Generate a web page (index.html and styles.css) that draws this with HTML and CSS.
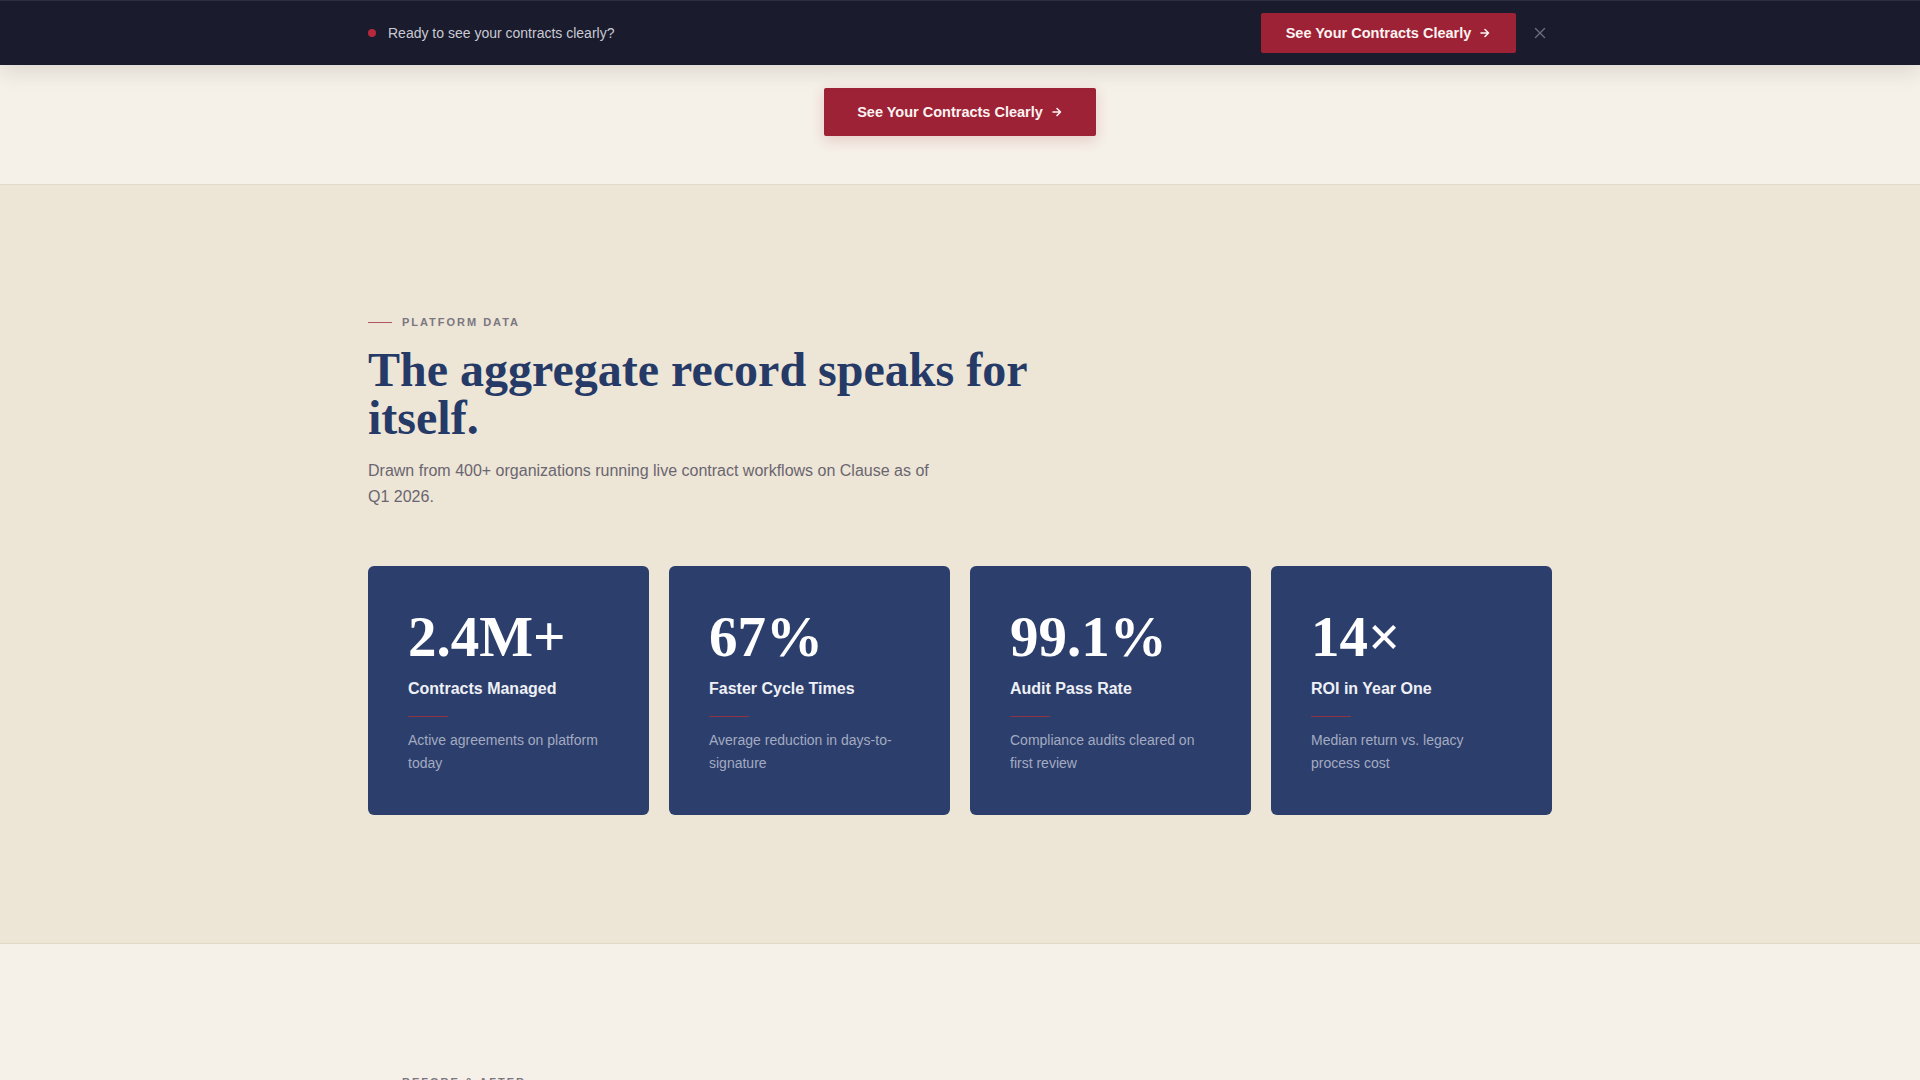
FILE: index.html
```html
<!DOCTYPE html>
<html lang="en">
<head>
<meta charset="utf-8">
<title>Clause — Platform Data</title>
<link rel="stylesheet" href="styles.css">
</head>
<body>
  <div class="topbar">
    <div class="container topbar-inner">
      <div class="topbar-msg">
        <span class="dot"></span>
        <span>Ready to see your contracts clearly?</span>
      </div>
      <div class="topbar-actions">
        <a class="btn btn-sm" href="#">See Your Contracts Clearly <span class="arrow">
          <svg width="12" height="12" viewBox="0 0 12 12"><path d="M2 6h7.5M6 2.5L9.5 6 6 9.5" fill="none" stroke="currentColor" stroke-width="1.6" stroke-linecap="round" stroke-linejoin="round"/></svg>
        </span></a>
        <button class="close" aria-label="Close">
          <svg width="12" height="12" viewBox="0 0 12 12"><path d="M1.5 1.5l9 9M10.5 1.5l-9 9" stroke="currentColor" stroke-width="1.4" stroke-linecap="round"/></svg>
        </button>
      </div>
    </div>
  </div>

  <section class="hero">
    <div class="container hero-inner">
      <a class="btn btn-lg" href="#">See Your Contracts Clearly <span class="arrow">
        <svg width="12" height="12" viewBox="0 0 12 12"><path d="M2 6h7.5M6 2.5L9.5 6 6 9.5" fill="none" stroke="currentColor" stroke-width="1.6" stroke-linecap="round" stroke-linejoin="round"/></svg>
      </span></a>
    </div>
  </section>

  <section class="stats">
    <div class="container">
      <div class="eyebrow"><span class="eyebrow-line"></span>PLATFORM DATA</div>
      <h2 class="title">The aggregate record speaks for itself.</h2>
      <p class="lead">Drawn from 400+ organizations running live contract workflows on Clause as of Q1 2026.</p>

      <div class="cards">
        <div class="card">
          <div class="num">2.4M+</div>
          <div class="label">Contracts Managed</div>
          <div class="rule"></div>
          <p class="desc">Active agreements on platform today</p>
        </div>
        <div class="card">
          <div class="num">67%</div>
          <div class="label">Faster Cycle Times</div>
          <div class="rule"></div>
          <p class="desc">Average reduction in days-to-signature</p>
        </div>
        <div class="card">
          <div class="num">99.1%</div>
          <div class="label">Audit Pass Rate</div>
          <div class="rule"></div>
          <p class="desc">Compliance audits cleared on first review</p>
        </div>
        <div class="card">
          <div class="num">14×</div>
          <div class="label">ROI in Year One</div>
          <div class="rule"></div>
          <p class="desc">Median return vs. legacy process cost</p>
        </div>
      </div>
    </div>
  </section>

  <section class="compare">
    <div class="container">
      <div class="eyebrow"><span class="eyebrow-line"></span>BEFORE &amp; AFTER</div>
    </div>
  </section>
</body>
</html>
```

FILE: styles.css
```css
* { box-sizing: border-box; }

html, body {
  margin: 0;
  padding: 0;
}

body {
  font-family: "Liberation Sans", Arial, sans-serif;
  background: #f5f0e8;
  color: #2a3a66;
}

.container {
  width: 1184px;
  margin: 0 auto;
}

/* Top bar */
.topbar {
  position: sticky;
  top: 0;
  z-index: 10;
  height: 65px;
  background: #1a1b2d;
  border-top: 1px solid #2c2e42;
  box-shadow: 0 6px 22px rgba(40, 30, 20, 0.12);
}

.topbar-inner {
  height: 64px;
  display: flex;
  align-items: center;
  justify-content: space-between;
}

.topbar-msg {
  display: flex;
  align-items: center;
  gap: 12px;
  font-size: 14px;
  color: #c9cad3;
}

.dot {
  width: 8px;
  height: 8px;
  border-radius: 50%;
  background: #b42a3c;
}

.topbar-actions {
  display: flex;
  align-items: center;
  gap: 12px;
}

.btn {
  display: inline-flex;
  align-items: center;
  justify-content: center;
  gap: 8px;
  white-space: nowrap;
  background: #9e2236;
  color: #fbf3f2;
  font-weight: 700;
  font-size: 14.5px;
  text-decoration: none;
  border-radius: 2px;
}

.btn .arrow {
  display: inline-flex;
}

.btn-sm {
  height: 40px;
  min-width: 255px;
  padding: 0 24px;
}

.btn-lg {
  height: 48px;
  min-width: 272px;
  padding: 0 32px;
  box-shadow: 0 4px 14px rgba(158, 34, 54, 0.18);
}

.close {
  width: 24px;
  height: 24px;
  padding: 0;
  border: 0;
  background: transparent;
  color: #6b6e80;
  display: inline-flex;
  align-items: center;
  justify-content: center;
}

/* Hero tail */
.hero {
  border-bottom: 1px solid #e2d9ca;
}

.hero-inner {
  display: flex;
  justify-content: center;
  padding: 23px 0 48px;
}

/* Stats section */
.stats {
  background: #ede5d6;
  padding: 127px 0 128px;
  border-bottom: 1px solid #e2d8c6;
}

.eyebrow {
  display: flex;
  align-items: center;
  gap: 10px;
  height: 20px;
  font-size: 11px;
  font-weight: 700;
  letter-spacing: 0.18em;
  color: #7a7780;
}

.eyebrow-line {
  width: 24px;
  height: 1px;
  background: #b0565f;
}

.title {
  margin: 14px 0 0;
  max-width: 720px;
  font-family: "Liberation Serif", "Times New Roman", serif;
  font-weight: 700;
  font-size: 48px;
  line-height: 1;
  color: #263a68;
}

.lead {
  margin: 16px 0 0;
  max-width: 576px;
  font-size: 16px;
  line-height: 26px;
  color: #6a6670;
}

.cards {
  margin-top: 56px;
  display: grid;
  grid-template-columns: repeat(4, 1fr);
  gap: 20px;
}

.card {
  background: #2c3e6b;
  border-radius: 6px;
  padding: 42px 40px 37px;
  min-height: 249px;
}

.num {
  font-family: "Liberation Serif", "Times New Roman", serif;
  font-weight: 700;
  font-size: 57px;
  line-height: 1;
  color: #ffffff;
}

.label {
  margin-top: 13px;
  font-size: 16px;
  font-weight: 700;
  line-height: 22px;
  color: #eef0f6;
}

.rule {
  margin-top: 16px;
  width: 40px;
  height: 1px;
  background: #8d3343;
}

.desc {
  margin: 12px 0 0;
  font-size: 14px;
  line-height: 23px;
  color: #a3abc2;
  max-width: 200px;
}

/* Next section */
.compare {
  padding: 128px 0;
  background: #f5f0e8;
}
```
